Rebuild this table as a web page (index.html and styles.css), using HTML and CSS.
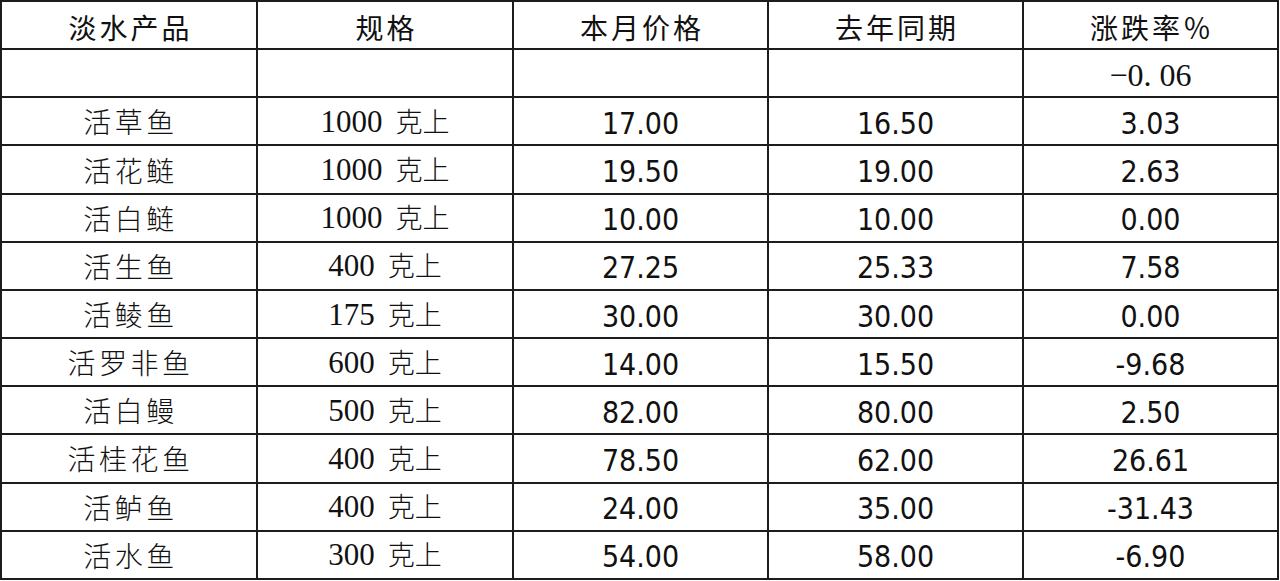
FILE: index.html
```html
<!DOCTYPE html>
<html lang="zh-CN">
<head>
<meta charset="utf-8">
<title>淡水产品价格</title>
<link rel="stylesheet" href="styles.css">
</head>
<body>
<table class="price-table">
  <colgroup>
    <col class="c1"><col class="c2"><col class="c3"><col class="c4"><col class="c5">
  </colgroup>
  <thead>
    <tr class="head-row">
      <th>淡水产品</th><th>规格</th><th>本月价格</th><th>去年同期</th><th>涨跌率％</th>
    </tr>
  </thead>
  <tbody>
    <tr><td></td><td></td><td></td><td></td><td class="avg">−0.<span class="gap"></span>06</td></tr>
    <tr><td class="name">活草鱼</td><td class="spec"><span class="num">1000</span><span class="unit">克上</span></td><td class="val">17.00</td><td class="val">16.50</td><td class="val">3.03</td></tr>
    <tr><td class="name">活花鲢</td><td class="spec"><span class="num">1000</span><span class="unit">克上</span></td><td class="val">19.50</td><td class="val">19.00</td><td class="val">2.63</td></tr>
    <tr><td class="name">活白鲢</td><td class="spec"><span class="num">1000</span><span class="unit">克上</span></td><td class="val">10.00</td><td class="val">10.00</td><td class="val">0.00</td></tr>
    <tr><td class="name">活生鱼</td><td class="spec"><span class="num">400</span><span class="unit">克上</span></td><td class="val">27.25</td><td class="val">25.33</td><td class="val">7.58</td></tr>
    <tr><td class="name">活鲮鱼</td><td class="spec"><span class="num">175</span><span class="unit">克上</span></td><td class="val">30.00</td><td class="val">30.00</td><td class="val">0.00</td></tr>
    <tr><td class="name">活罗非鱼</td><td class="spec"><span class="num">600</span><span class="unit">克上</span></td><td class="val">14.00</td><td class="val">15.50</td><td class="val">-9.68</td></tr>
    <tr><td class="name">活白鳗</td><td class="spec"><span class="num">500</span><span class="unit">克上</span></td><td class="val">82.00</td><td class="val">80.00</td><td class="val">2.50</td></tr>
    <tr><td class="name">活桂花鱼</td><td class="spec"><span class="num">400</span><span class="unit">克上</span></td><td class="val">78.50</td><td class="val">62.00</td><td class="val">26.61</td></tr>
    <tr><td class="name">活鲈鱼</td><td class="spec"><span class="num">400</span><span class="unit">克上</span></td><td class="val">24.00</td><td class="val">35.00</td><td class="val">-31.43</td></tr>
    <tr><td class="name">活水鱼</td><td class="spec"><span class="num">300</span><span class="unit">克上</span></td><td class="val">54.00</td><td class="val">58.00</td><td class="val">-6.90</td></tr>
  </tbody>
</table>
</body>
</html>
```

FILE: styles.css
```css
html, body {
  margin: 0;
  padding: 0;
  background: #ffffff;
}

.price-table {
  border-collapse: separate;
  border-spacing: 0;
  table-layout: fixed;
  width: 1279px;
  border-top: 2px solid #1c1c1c;
  border-left: 2px solid #1c1c1c;
  color: #111111;
}

.c1, .c2 { width: 256px; }
.c3, .c4, .c5 { width: 255px; }

.price-table th,
.price-table td {
  border-right: 2px solid #1c1c1c;
  border-bottom: 2px solid #1c1c1c;
  height: 46.17px;
  padding: 0;
  text-align: center;
  vertical-align: middle;
  white-space: nowrap;
  overflow: hidden;
  box-sizing: content-box;
}

.price-table th {
  font-family: "Noto Sans CJK SC", sans-serif;
  font-weight: 400;
  font-size: 28px;
  letter-spacing: 3px;
  padding-left: 3px;
  padding-top: 4px;
  height: 42.17px;
  line-height: 1;
}

.name {
  font-family: "Noto Sans CJK SC", sans-serif;
  font-weight: 300;
  font-size: 28px;
  letter-spacing: 3.5px;
  padding-left: 3px !important;
  line-height: 1;
}

.spec {
  line-height: 1;
}

.spec .num {
  font-family: "Liberation Serif", serif;
  font-size: 31px;
  margin-right: 13px;
}

.spec .unit {
  font-family: "Noto Sans CJK SC", sans-serif;
  font-weight: 300;
  font-size: 27px;
}

.val {
  font-family: "DejaVu Sans Condensed", "DejaVu Sans", sans-serif;
  font-stretch: condensed;
  font-size: 30px;
  line-height: 1;
  padding-top: 5px !important;
  height: 41.17px !important;
}

.avg {
  font-family: "Liberation Serif", serif;
  font-size: 32px;
  line-height: 1;
  padding-top: 4px !important;
  height: 42.17px !important;
}

.gap {
  display: inline-block;
  width: 8px;
}
```
